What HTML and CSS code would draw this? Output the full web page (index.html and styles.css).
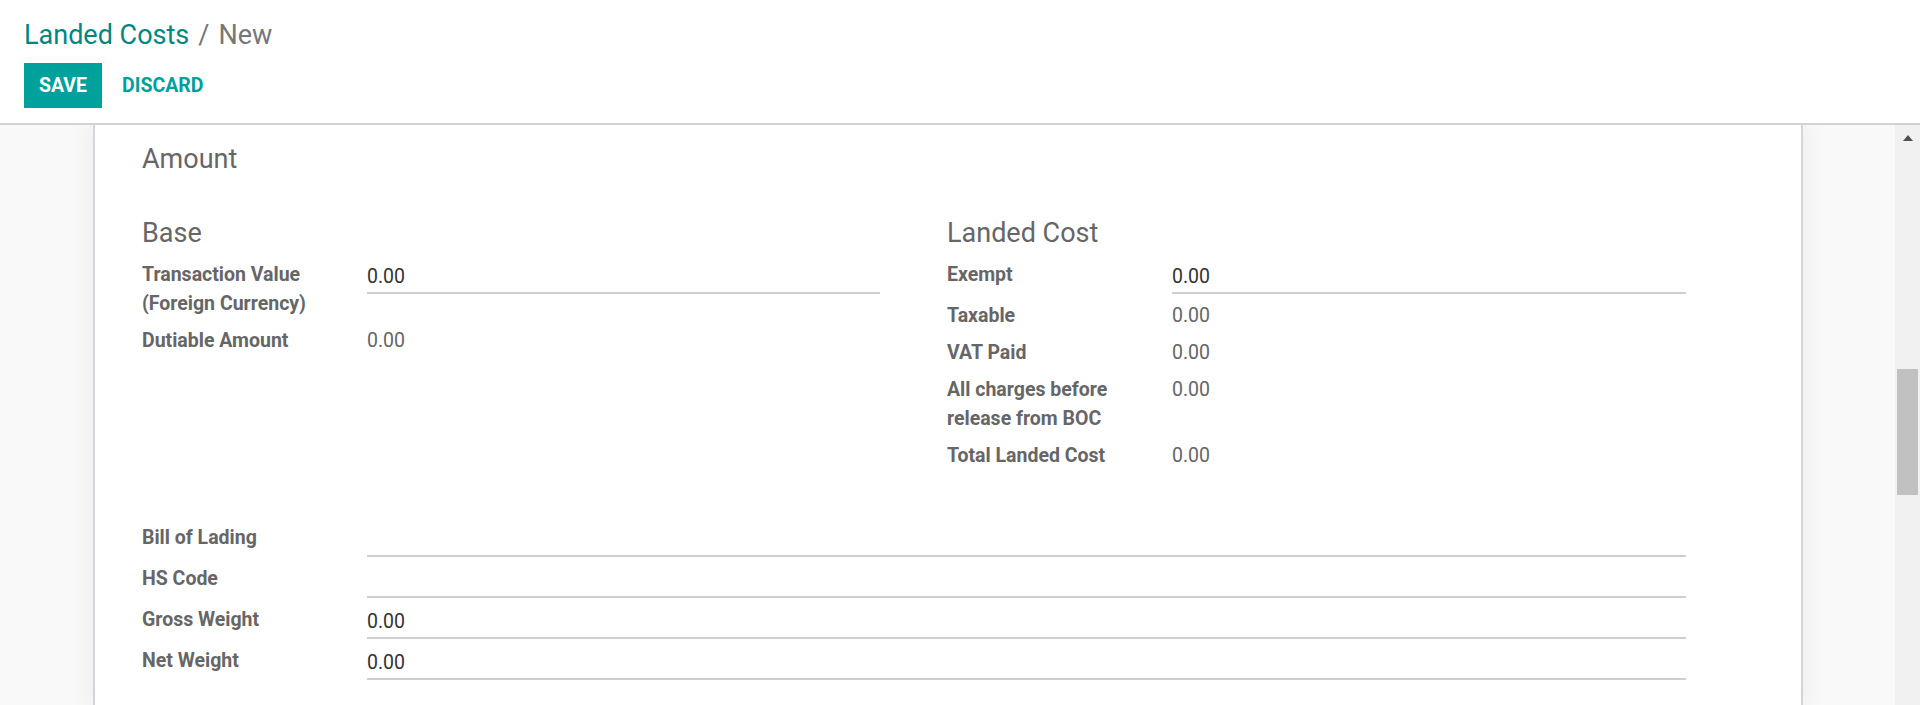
FILE: index.html
```html
<!DOCTYPE html>
<html lang="en">
<head>
<meta charset="utf-8">
<title>Landed Costs / New</title>
<link rel="stylesheet" href="styles.css">
</head>
<body>
<div class="app">
  <header class="cp">
    <ol class="crumbs">
      <li class="crumb-link">Landed Costs</li>
      <li class="crumb-sep">/</li>
      <li class="crumb-active">New</li>
    </ol>
    <div class="buttons">
      <button class="btn btn-save">Save</button>
      <button class="btn btn-discard">Discard</button>
    </div>
  </header>
  <div class="content">
    <div class="scroller">
      <div class="sheet">
        <h2 class="sep-title">Amount</h2>
        <div class="two-col">
          <div class="group">
            <h3 class="group-title">Base</h3>
            <div class="row"><div class="lbl">Transaction Value (Foreign Currency)</div><div class="inp">0.00</div></div>
            <div class="row"><div class="lbl">Dutiable Amount</div><div class="val">0.00</div></div>
          </div>
          <div class="group">
            <h3 class="group-title">Landed Cost</h3>
            <div class="row"><div class="lbl">Exempt</div><div class="inp">0.00</div></div>
            <div class="row"><div class="lbl">Taxable</div><div class="val">0.00</div></div>
            <div class="row"><div class="lbl">VAT Paid</div><div class="val">0.00</div></div>
            <div class="row"><div class="lbl">All charges before release from BOC</div><div class="val">0.00</div></div>
            <div class="row"><div class="lbl">Total Landed Cost</div><div class="val">0.00</div></div>
          </div>
        </div>
        <div class="group group-full">
          <div class="row"><div class="lbl">Bill of Lading</div><div class="inp"></div></div>
          <div class="row"><div class="lbl">HS Code</div><div class="inp"></div></div>
          <div class="row"><div class="lbl">Gross Weight</div><div class="inp">0.00</div></div>
          <div class="row"><div class="lbl">Net Weight</div><div class="inp">0.00</div></div>
        </div>
      </div>
    </div>
    <div class="scrollbar">
      <div class="sb-up"><span class="sb-arrow"></span></div>
      <div class="sb-thumb"></div>
    </div>
  </div>
</div>
</body>
</html>
```
FILE: styles.css
```css
html, body {
  margin: 0;
  padding: 0;
  height: 100%;
}
body {
  font-family: Roboto, "Noto Sans", "Liberation Sans", sans-serif;
  font-size: 19.5px;
  line-height: 29.25px;
  color: #666666;
  background: #ffffff;
  overflow: hidden;
}
.app {
  height: 705px;
  display: flex;
  flex-direction: column;
}

/* control panel */
.cp {
  flex: none;
  background: #ffffff;
  border-bottom: 2px solid #d2d2d2;
  padding: 15px 24px 15px;
}
.crumbs {
  display: flex;
  margin: 0;
  padding: 0;
  list-style: none;
  font-size: 27px;
  line-height: 40px;
}
.crumb-link {
  color: #008784;
}
.crumb-sep {
  color: #777777;
  padding: 0 9px;
}
.crumb-active {
  color: #777777;
}
.buttons {
  display: flex;
  margin-top: 8px;
  gap: 5px;
}
.btn {
  font-family: Roboto, "Noto Sans", sans-serif;
  font-size: 19.5px;
  font-weight: 700;
  text-transform: uppercase;
  border: 0;
  height: 45px;
  padding: 0 15px;
  cursor: pointer;
}
.btn-save {
  background: #00a09d;
  color: #ffffff;
}
.btn-discard {
  background: transparent;
  color: #00a09d;
}

/* content */
.content {
  flex: 1;
  min-height: 0;
  display: flex;
  background: #f9f9f9;
}
.scroller {
  flex: 1;
  min-width: 0;
  overflow: hidden;
}
.sheet {
  box-sizing: border-box;
  width: 1710px;
  min-height: 100%;
  margin: 0 auto;
  background: #ffffff;
  border-left: 2px solid #d2d5da;
  border-right: 2px solid #d2d5da;
  box-shadow: 0 0 26px rgba(0, 0, 0, 0.07);
  padding: 18px 114.5px 0 47.5px;
}
.sep-title,
.group-title {
  font-size: 27px;
  line-height: 32px;
  font-weight: 400;
  color: #666666;
  margin: 0;
}
.group-title {
  margin-bottom: 10.6px;
}
.two-col {
  display: grid;
  grid-template-columns: 737.5px 1fr;
  column-gap: 67.5px;
  margin-top: 42px;
  align-items: start;
}
.row {
  display: grid;
  grid-template-columns: 225px 1fr;
  align-items: start;
  padding-bottom: 7.5px;
}
.lbl {
  font-weight: 700;
  color: #666666;
  padding-right: 24px;
}
.val {
  color: #666666;
}
.inp {
  color: #333333;
  padding: 2.5px 0 0.5px;
  min-height: 29.25px;
  border-bottom: 2px solid #cfcfcf;
}
.group-full {
  margin-top: 45px;
}
.group-full .row {
  padding-bottom: 6.75px;
}

/* scrollbar */
.scrollbar {
  flex: none;
  width: 25px;
  background: #f1f1f1;
}
.sb-up {
  height: 25px;
  display: flex;
  align-items: center;
  justify-content: center;
}
.sb-arrow {
  width: 0;
  height: 0;
  border-left: 5.5px solid transparent;
  border-right: 5.5px solid transparent;
  border-bottom: 6px solid #505050;
}
.sb-thumb {
  margin: 219px 2px 0;
  height: 126px;
  background: #c1c1c1;
}
```
